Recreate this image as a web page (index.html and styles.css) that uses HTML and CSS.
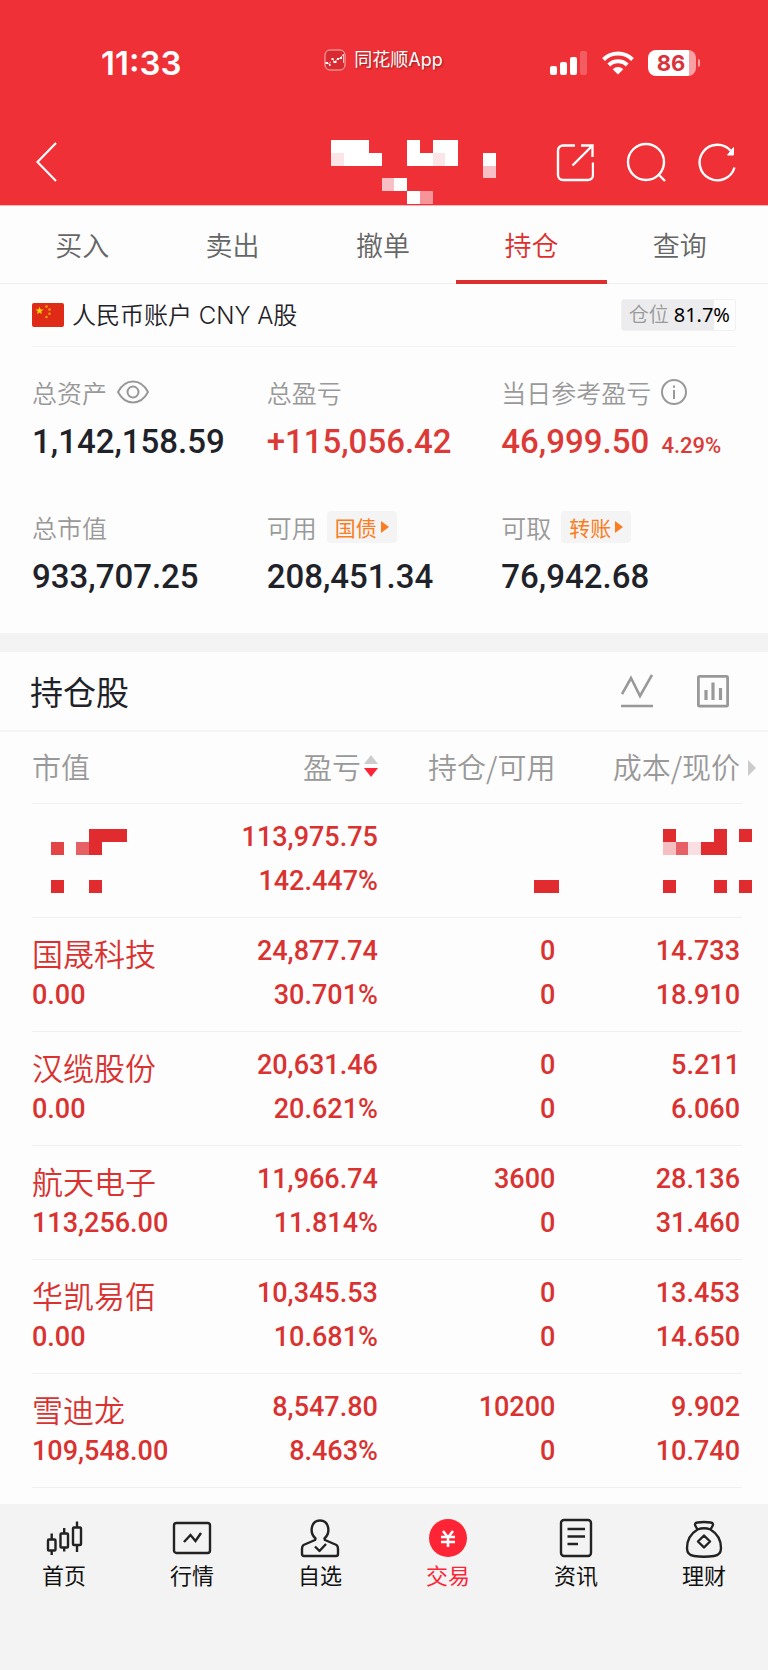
FILE: index.html
```html
<!DOCTYPE html>
<html lang="zh-CN">
<head>
<meta charset="utf-8">
<meta name="viewport" content="width=device-width, initial-scale=1">
<title>持仓</title>
<link rel="stylesheet" href="styles.css">
</head>
<body>
<div class="app">
  <header class="header">
    <div class="status">
      <span class="status-time">11:33</span>
      <span class="status-app">
        <svg width="22" height="22" viewBox="0 0 22 22" aria-hidden="true"><rect x="1" y="1" width="20" height="20" rx="5" fill="#d82a30" stroke="#fff" stroke-opacity=".65"/><path d="M1.500 14h2.500M5 16h1.500M7.500 10h2M9.500 13h3M13 10h2M16 9h2" stroke="#fff" stroke-width="2.200"/><path d="M4 15l3-2M8.500 10l2 3 3-3 3-1 3-4v9" fill="none" stroke="#fff" stroke-width=".7"/></svg>
        同花顺App
      </span>
      <span class="status-icons">
        <svg width="38" height="24" viewBox="0 0 38 24" fill="#fff" aria-label="信号"><rect x="0" y="15" width="7" height="9" rx="2"/><rect x="10" y="11" width="7" height="13" rx="2"/><rect x="20" y="6" width="7" height="18" rx="2"/><rect x="30" y="0" width="7" height="24" rx="2" opacity=".22"/></svg>
        <svg width="32" height="24" viewBox="0 0 32 24" fill="none" stroke="#fff" stroke-width="4" aria-label="无线网络"><path d="M1.500 8.500a20.500 20.500 0 0 1 29 0M6.800 14a13 13 0 0 1 18.400 0"/><path d="M16 23.500l-5.300-5.200a7.500 7.500 0 0 1 10.600 0z" fill="#fff" stroke="none"/></svg>
        <span class="battery"><span class="battery-body">86</span><span class="battery-tip"></span></span>
      </span>
    </div>
    <div class="topbar">
      <button class="icon-btn" aria-label="返回"><svg width="22" height="40" viewBox="0 0 22 40" fill="none" stroke="#fff" stroke-width="2.200"><path d="M20 1L1.500 20 20 39"/></svg></button>
      <svg class="topbar-title" width="165" height="64" viewBox="0 0 13 5" preserveAspectRatio="none" shape-rendering="crispEdges" fill="#fff" aria-hidden="true"><path d="M0 0h3v1h1v1H1V1H0zM6 0h1v1h1v1H6zM8 0h2v2H9V1H8zM12 1h1v1h-1zM5 3h1v1H5zM6 4h1v1H6z"/><path fill="#fce5e7" d="M0 1h1v1H0zM8 1h1v1H8z"/><path fill="#f8bfc4" d="M12 2h1v1h-1zM4 3h1v1H4z"/><path fill="#f6949a" d="M7 4h1v1H7z"/></svg>
      <div class="topbar-actions">
        <button class="icon-btn" aria-label="分享"><svg width="38" height="40" viewBox="0 0 38 40" fill="none" stroke="#fff" stroke-width="2.400"><path d="M19 3.500H7a5 5 0 0 0-5 5V33a5 5 0 0 0 5 5h25a5 5 0 0 0 5-5V20.500M25 3.500h11.500V15M36 4L16.500 23.500"/></svg></button>
        <button class="icon-btn" aria-label="搜索"><svg width="40" height="40" viewBox="0 0 40 40" fill="none" stroke="#fff" stroke-width="2.400"><circle cx="20" cy="20" r="18"/><path d="M32 32l7 7"/></svg></button>
        <button class="icon-btn" aria-label="刷新"><svg width="38" height="40" viewBox="0 0 38 40" fill="none" stroke="#fff" stroke-width="2.400"><path d="M36.500 25.500A17.800 17.800 0 1 1 33 9l1.500 2"/><path d="M35.500 5.500v7.500h-6z" fill="#fff" stroke-width="1"/></svg></button>
      </div>
    </div>
  </header>

  <nav class="tabs">
    <a class="tab" href="#buy">买入</a>
    <a class="tab" href="#sell">卖出</a>
    <a class="tab" href="#cancel">撤单</a>
    <a class="tab tab-active" href="#holdings" aria-current="page">持仓</a>
    <a class="tab" href="#query">查询</a>
  </nav>

  <section class="account">
    <div class="account-row">
      <svg width="32" height="24" viewBox="0 0 32 24" aria-hidden="true"><rect width="32" height="24" rx="2" fill="#de2a16"/><path fill="#ffde00" d="M7.500 3.700l1 2.900h3L9.100 8.400l.9 2.900-2.500-1.800L5 11.300l.9-2.900L3.500 6.600h3z"/><g fill="#f8a50c"><circle cx="14.500" cy="3.500" r="1.200"/><circle cx="17.500" cy="6.500" r="1.200"/><circle cx="17.500" cy="10.800" r="1.200"/><circle cx="14.500" cy="14" r="1.200"/></g></svg>
      <h1 class="account-name">人民币账户 CNY A股</h1>
      <span class="position"><span class="position-label">仓位</span>81.7%</span>
    </div>
    <dl class="summary">
      <div class="stat">
        <dt class="stat-label">总资产 <button class="icon-btn" aria-label="隐藏金额"><svg width="32" height="24" viewBox="0 0 32 24" fill="none" stroke="#999" stroke-width="2"><path d="M1 12C5 4.500 10 1.500 16 1.500S27 4.500 31 12C27 19.500 22 22.500 16 22.500S5 19.500 1 12z"/><circle cx="16" cy="12" r="5.500"/></svg></button></dt>
        <dd class="stat-value">1,142,158.59</dd>
      </div>
      <div class="stat">
        <dt class="stat-label">总盈亏</dt>
        <dd class="stat-value up">+115,056.42</dd>
      </div>
      <div class="stat">
        <dt class="stat-label">当日参考盈亏 <button class="icon-btn" aria-label="说明"><svg width="26" height="26" viewBox="0 0 26 26" fill="none" stroke="#999" stroke-width="2"><circle cx="13" cy="13" r="12"/><path d="M13 11v9M13 6.500v2.300"/></svg></button></dt>
        <dd class="stat-value up">46,999.50 <span class="stat-rate">4.29%</span></dd>
      </div>
      <div class="stat">
        <dt class="stat-label">总市值</dt>
        <dd class="stat-value">933,707.25</dd>
      </div>
      <div class="stat">
        <dt class="stat-label">可用 <button class="chip">国债<span class="chip-arrow"></span></button></dt>
        <dd class="stat-value">208,451.34</dd>
      </div>
      <div class="stat">
        <dt class="stat-label">可取 <button class="chip">转账<span class="chip-arrow"></span></button></dt>
        <dd class="stat-value">76,942.68</dd>
      </div>
    </dl>
  </section>

  <main class="holdings">
    <div class="holdings-head">
      <h2 class="holdings-title">持仓股</h2>
      <button class="icon-btn" aria-label="走势"><svg width="32" height="34" viewBox="0 0 32 34" fill="none" stroke="#999" stroke-width="2.600"><path d="M1 20L10 4l9 18L31 1M0 32h32"/></svg></button>
      <button class="icon-btn" aria-label="分析"><svg width="32" height="34" viewBox="0 0 32 34" fill="none" stroke="#999" stroke-width="2.800"><rect x="1.400" y="2.400" width="29.200" height="29.800" rx="1"/><path stroke-width="3.200" d="M9 16v10M16 8.500V26M23.500 14v12"/></svg></button>
    </div>
    <table class="table">
      <colgroup><col class="col-name"><col class="col-profit"><col class="col-amount"><col class="col-price"></colgroup>
      <thead>
        <tr>
          <th scope="col">市值</th>
          <th scope="col"><span class="sort">盈亏<svg width="14" height="24" viewBox="0 0 14 24" aria-hidden="true"><path d="M7 1l7 9H0z" fill="#ccc"/><path d="M0 14h14l-7 9z" fill="#fd2436"/></svg></span></th>
          <th scope="col">持仓/可用</th>
          <th scope="col" class="th-more">成本/现价<span class="more-arrow"></span></th>
        </tr>
      </thead>
      <tbody>
        <tr>
          <td><svg class="mosaic mosaic-name" width="76" height="64" viewBox="0 0 6 5" preserveAspectRatio="none" shape-rendering="crispEdges" fill="#e02c2e" aria-hidden="true"><path d="M3 0h3v1H4v1H3zM0 4h1v1H0zM3 4h1v1H3z"/><path fill="#e34546" d="M0 1h1v1H0z"/><path fill="#e66165" d="M2 1h1v1H2z"/></svg></td>
          <td><div>113,975.75</div><div>142.447%</div></td>
          <td><svg class="mosaic mosaic-amount" width="25" height="64" viewBox="0 0 2 5" preserveAspectRatio="none" shape-rendering="crispEdges" fill="#e02c2e" aria-hidden="true"><path d="M0 4h2v1H0z"/></svg></td>
          <td><svg class="mosaic mosaic-price" width="89" height="64" viewBox="0 0 7 5" preserveAspectRatio="none" shape-rendering="crispEdges" fill="#e02c2e" aria-hidden="true"><path d="M0 0h1v1H0zM4 0h1v2H3V1h1zM6 0h1v1H6zM0 4h1v1H0zM4 4h1v1H4zM6 4h1v1H6z"/><path fill="#f5bfc2" d="M0 1h1v1H0z"/><path fill="#e66165" d="M1 1h1v1H1z"/><path fill="#f9dfe1" d="M2 1h1v1H2z"/></svg></td>
        </tr>
        <tr>
          <td><div class="stock">国晟科技</div><div class="worth">0.00</div></td>
          <td><div>24,877.74</div><div>30.701%</div></td>
          <td><div>0</div><div>0</div></td>
          <td><div>14.733</div><div>18.910</div></td>
        </tr>
        <tr>
          <td><div class="stock">汉缆股份</div><div class="worth">0.00</div></td>
          <td><div>20,631.46</div><div>20.621%</div></td>
          <td><div>0</div><div>0</div></td>
          <td><div>5.211</div><div>6.060</div></td>
        </tr>
        <tr>
          <td><div class="stock">航天电子</div><div class="worth">113,256.00</div></td>
          <td><div>11,966.74</div><div>11.814%</div></td>
          <td><div>3600</div><div>0</div></td>
          <td><div>28.136</div><div>31.460</div></td>
        </tr>
        <tr>
          <td><div class="stock">华凯易佰</div><div class="worth">0.00</div></td>
          <td><div>10,345.53</div><div>10.681%</div></td>
          <td><div>0</div><div>0</div></td>
          <td><div>13.453</div><div>14.650</div></td>
        </tr>
        <tr>
          <td><div class="stock">雪迪龙</div><div class="worth">109,548.00</div></td>
          <td><div>8,547.80</div><div>8.463%</div></td>
          <td><div>10200</div><div>0</div></td>
          <td><div>9.902</div><div>10.740</div></td>
        </tr>
      </tbody>
    </table>
  </main>

  <nav class="bottom-nav">
    <a class="nav-item" href="#home"><svg width="40" height="40" viewBox="0 0 40 40" fill="none" stroke="#222" stroke-width="2.400"><rect x="4" y="21.500" width="7.500" height="11" rx="1"/><rect x="16.500" y="15.500" width="7.500" height="14" rx="1"/><rect x="29" y="9.500" width="8" height="17.500" rx="1"/><path d="M7.700 15.500v6M7.700 32.500V37M20.200 10v5.500M20.200 29.500v4M33 3.500v6M33 27v7"/></svg>首页</a>
    <a class="nav-item" href="#market"><svg width="40" height="40" viewBox="0 0 40 40" fill="none" stroke="#222" stroke-width="2.400"><rect x="2" y="5" width="36" height="30" rx="2.500"/><path d="M12 24l6.500-7 5 6L29 15"/></svg>行情</a>
    <a class="nav-item" href="#watch"><svg width="40" height="40" viewBox="0 0 40 40" fill="none" stroke="#222" stroke-width="2.400" stroke-linejoin="round"><path d="M15.500 20.500C9 14.500 11 2.500 20 2.500s11 12 4.500 18L25 22l11.500 5c1.500 1 1.500 2 1.500 4v5q0 2-2 2H4q-2 0-2-2v-5c0-2 0-3 1.500-4L15 22z"/><path d="M15 28.500l4.500 4.500 6.500-7"/></svg>自选</a>
    <a class="nav-item nav-active" href="#trade" aria-current="page"><svg width="40" height="40" viewBox="0 0 40 40"><circle cx="20" cy="20" r="19" fill="#fd2436"/><path d="M15 13l5 6.500 5-6.500M13 19h14M13 24h14M20 19v10" fill="none" stroke="#fff" stroke-width="2.600"/></svg>交易</a>
    <a class="nav-item" href="#news"><svg width="40" height="40" viewBox="0 0 40 40" fill="none" stroke="#222" stroke-width="2.400"><rect x="5" y="2" width="30" height="36" rx="3"/><path d="M11.500 11H29M11.500 18.500H29M11.500 26h10.500"/></svg>资讯</a>
    <a class="nav-item" href="#wealth"><svg width="40" height="40" viewBox="0 0 40 40" fill="none" stroke="#222" stroke-width="2.400" stroke-linejoin="round"><path d="M13.500 11.500L11.500 8q-1.500-3 2-3.500 6.500-1 13 0 3.500.5 2 3.500l-2 3.500M13.500 11.500C7 15.500 3 22 3 30q0 7 7 8 10 1.500 20 0 7-1 7-8c0-8-4-14.500-10.500-18.500q-6.500-2.500-13 0zM20 17.500l6 6-6 6-6-6z"/></svg>理财</a>
  </nav>
</div>
</body>
</html>
```
FILE: styles.css
```css
* {
  box-sizing: border-box;
}

body {
  margin: 0;
  background: #f3f3f3;
  color: #1f2329;
  font-family: "Noto Sans CJK SC", sans-serif;
}

h1, h2, dl, dd {
  margin: 0;
  font-weight: 400;
}

a {
  color: inherit;
  text-decoration: none;
}

svg {
  flex: none;
}

.app {
  display: flex;
  flex-direction: column;
  min-height: 100vh;
}

.icon-btn {
  display: flex;
  padding: 0;
  border: 0;
  background: none;
}

/* Header */
.header {
  background: #ef3036;
  color: #fff;
  border-bottom: 1px solid #f7b8ba;
}

.status {
  display: grid;
  grid-template-columns: 1fr auto 1fr;
  align-items: center;
  height: 118px;
  padding: 8px 68px 0 101px;
}

.status-time {
  font: 600 33px/40px Inter, sans-serif;
}

.status-app {
  display: flex;
  align-items: center;
  gap: 8px;
  padding: 0 34px 6px 0;
  font-family: Inter, "Noto Sans CJK SC", sans-serif;
  font-size: 18px;
  line-height: 24px;
  text-shadow: 1px 1px 2px rgba(0, 0, 0, .4);
}

.status-icons {
  display: flex;
  align-items: center;
  justify-content: flex-end;
  gap: 14px;
}

.battery {
  display: flex;
  align-items: center;
  gap: 2px;
}

.battery-body {
  width: 48px;
  border-radius: 8px;
  padding-right: 2px;
  background: linear-gradient(90deg, #fff 86%, #f8a0a4 86%);
  color: #d8333a;
  font: 700 22px/26px Inter, sans-serif;
  text-align: center;
}

.battery-tip {
  width: 2px;
  height: 8px;
  border-radius: 0 2px 2px 0;
  background: #f8a0a4;
}

.topbar {
  display: flex;
  align-items: center;
  height: 87px;
  padding: 0 32px 0 36px;
}

.topbar-title {
  align-self: flex-end;
  margin: 0 60px 1px auto;
}

.topbar-actions {
  display: flex;
  gap: 32px;
}

/* Tabs */
.tabs {
  display: flex;
  padding: 0 13px 0 7px;
  background: #fdfdfd;
  border-bottom: 1px solid #eee;
}

.tab {
  flex: 1;
  height: 78px;
  margin-bottom: -1px;
  border-bottom: 4px solid transparent;
  color: #666;
  font-size: 27px;
  font-weight: 350;
  line-height: 78px;
  text-align: center;
}

.tab-active {
  margin: 0 -2px -1px;
  border-bottom-color: #dd302e;
  color: #dd302e;
}

/* Account */
.account {
  padding: 0 32px 30px;
  background: #fdfdfd;
  border-bottom: 1px solid #f3f3f3;
}

.account-row {
  display: flex;
  align-items: center;
  gap: 8px;
  height: 63px;
  border-bottom: 1px solid #f3f3f3;
}

.account-name {
  padding-top: 2px;
  font: 350 24px/32px Inter, "Noto Sans CJK SC", sans-serif;
}

.position {
  display: flex;
  align-items: center;
  gap: 5px;
  height: 32px;
  margin-left: auto;
  padding: 0 5px 0 7px;
  border: 1px solid #f1f1f2;
  border-radius: 3px;
  background: linear-gradient(90deg, #ececee 81.7%, #fdfdfd 81.7%);
  color: #000;
  font: 400 20px/28px "Noto Sans", "Noto Sans CJK SC", sans-serif;
}

.position-label {
  color: #999;
  font-weight: 350;
}

.summary {
  display: grid;
  grid-template-columns: repeat(3, 1fr);
  row-gap: 39px;
  padding-top: 25px;
}

.stat-label {
  display: flex;
  align-items: center;
  gap: 10px;
  height: 40px;
  color: #999;
  font-size: 25px;
  font-weight: 350;
}

.stat-value {
  padding-top: 4px;
  font: 500 33px/52px Roboto, sans-serif;
  white-space: nowrap;
}

.up {
  color: #dc3a36;
}

.stat-rate {
  margin-left: 4px;
  font-size: 22px;
  line-height: 24px;
}

.chip {
  display: flex;
  align-items: center;
  gap: 4px;
  height: 32px;
  padding: 0 8px;
  border: 0;
  border-radius: 4px;
  background: #f4f4f4;
  color: #fa7d22;
  font: 400 21px/32px "Noto Sans CJK SC", sans-serif;
}

.chip-arrow {
  border: solid transparent;
  border-width: 6px 0 6px 8px;
  border-left-color: #fa7d22;
}

/* Holdings */
.holdings {
  margin-top: 18px;
  padding-bottom: 16px;
  background: #fdfdfd;
}

.holdings-head {
  display: flex;
  align-items: center;
  gap: 44px;
  height: 80px;
  padding: 0 39px 0 30px;
  border-bottom: 2px solid #f5f5f5;
}

.holdings-title {
  margin-right: auto;
  font-size: 33px;
}

.table {
  width: calc(100% - 58px);
  margin-left: 32px;
  border-collapse: collapse;
  table-layout: fixed;
  color: #d93230;
  font: 500 27px/44px Roboto, sans-serif;
  text-align: right;
}

.col-name {
  width: 24%;
}

.col-profit {
  width: 25%;
}

.col-amount {
  width: 25%;
}

.table th {
  height: 71px;
  padding: 0 2px 3px 0;
  border-bottom: 1px solid #f0f0f0;
  color: #999;
  font: 350 29px/44px "Noto Sans CJK SC", sans-serif;
  white-space: nowrap;
}

.table td {
  height: 114px;
  padding: 11px 2px 10px 0;
  border-bottom: 1px solid #f0f0f0;
  vertical-align: top;
}

.table th:first-child,
.table td:first-child {
  text-align: left;
}

.sort {
  display: inline-flex;
  align-items: center;
  gap: 3px;
}

.th-more {
  position: relative;
}

.more-arrow {
  position: absolute;
  top: 28px;
  right: -14px;
  border: solid transparent;
  border-width: 8px 0 8px 8px;
  border-left-color: #ccc;
}

.stock {
  font: 350 31px/48px "Noto Sans CJK SC", sans-serif;
}

.worth {
  line-height: 36px;
}

.mosaic {
  display: block;
  margin: 14px 0 0 auto;
}

.mosaic-name {
  margin-left: 19px;
}

.mosaic-amount {
  margin-right: -4px;
}

.mosaic-price {
  margin-right: -12px;
}

/* Bottom navigation */
.bottom-nav {
  display: grid;
  grid-template-columns: repeat(6, 1fr);
  padding: 14px 0 78px;
  background: #f3f3f3;
}

.nav-item {
  display: flex;
  flex-direction: column;
  align-items: center;
  color: #111;
  font-size: 22px;
  line-height: 32px;
}

.nav-active {
  color: #fd2436;
}
```
